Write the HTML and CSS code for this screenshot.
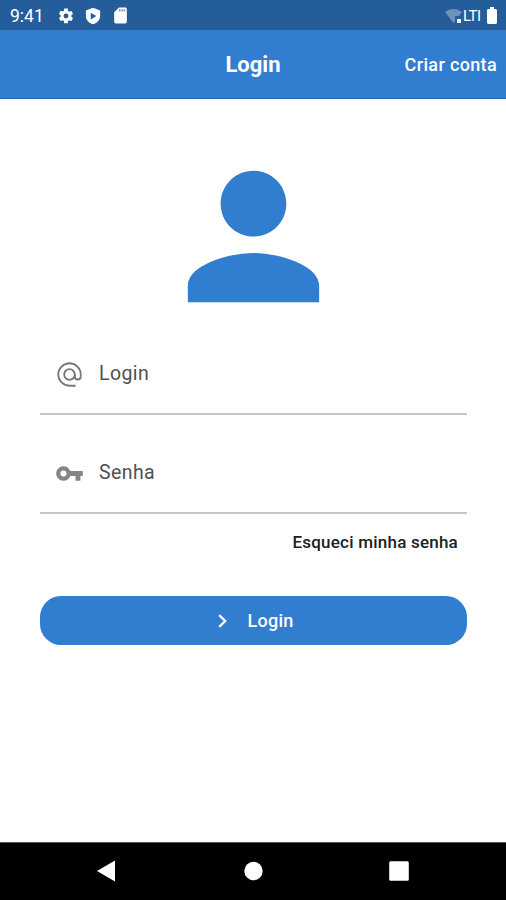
FILE: index.html
```html
<!DOCTYPE html>
<html lang="pt-BR">
<head>
<meta charset="utf-8">
<title>Login</title>
<link rel="stylesheet" href="styles.css">
</head>
<body>
<div class="status">
  <span class="time">9:41</span>
  <svg class="gear" viewBox="0 0 24 24"><path d="M19.14 12.94c.04-.3.06-.61.06-.94s-.02-.64-.07-.94l2.03-1.58a.49.49 0 0 0 .12-.61l-1.92-3.32a.49.49 0 0 0-.59-.22l-2.39.96a7 7 0 0 0-1.62-.94l-.36-2.54A.48.48 0 0 0 13.92 2h-3.84a.48.48 0 0 0-.47.41l-.36 2.54a7.3 7.3 0 0 0-1.62.94l-2.39-.96a.48.48 0 0 0-.59.22L2.74 8.87a.48.48 0 0 0 .12.61l2.03 1.58a6 6 0 0 0 0 1.88l-2.03 1.58a.49.49 0 0 0-.12.61l1.92 3.32c.12.22.37.29.59.22l2.39-.96c.5.38 1.03.7 1.62.94l.36 2.54c.05.24.24.41.48.41h3.84c.24 0 .44-.17.47-.41l.36-2.54a7 7 0 0 0 1.62-.94l2.39.96c.22.08.47 0 .59-.22l1.92-3.32a.48.48 0 0 0-.12-.61zM12 15.3a3.3 3.3 0 1 1 0-6.6 3.3 3.3 0 0 1 0 6.6z"/></svg>
  <svg class="shield" viewBox="0 0 24 24"><path fill-rule="evenodd" d="M12 1 2.500 4.500v7c0 5.500 3.800 9.700 9.500 11.500 5.700-1.800 9.500-6 9.500-11.500v-7zM9 7.500v9l7.500-4.500z"/></svg>
  <svg class="sd" viewBox="0 0 24 24"><path d="M18 2h-8L4 8v12c0 1.100.9 2 2 2h12c1.100 0 2-.9 2-2V4c0-1.100-.9-2-2-2z"/><path class="slots" d="M10 4h2v3h-2zM13 4h2v3h-2zM16 4h2v3h-2z"/></svg>
  <span class="signals">
    <svg class="wifi" viewBox="0 0 18 16"><path class="dim" d="M0 4Q8.500-2 17 4L14 8H10V13L8.500 15z"/><path d="M12 11h4v4h-4z"/></svg>
    <span class="lte">LTI</span>
    <svg class="battery" viewBox="0 0 10 17"><path d="M3 0h4v2h2l1 1v13l-1 1H1l-1-1V3l1-1h2z"/></svg>
  </span>
</div>
<header class="appbar">
  <span></span>
  <h1>Login</h1>
  <a class="create">Criar conta</a>
</header>
<main>
  <svg class="person" viewBox="0 0 24 24"><path d="M12 12c2.210 0 4-1.790 4-4s-1.790-4-4-4-4 1.790-4 4 1.790 4 4 4zm0 2c-2.670 0-8 1.340-8 4v2h16v-2c0-2.660-5.330-4-8-4z"/></svg>
  <div class="field">
    <svg class="at" viewBox="0 0 24 24"><circle cx="12" cy="12" r="4.400"/><path d="M17 21.300h-5A9.300 9.300 0 1 1 21.300 12v1.700a2.450 2.450 0 0 1-4.900 0V12"/></svg>
    <span class="login-label">Login</span>
  </div>
  <div class="field">
    <svg viewBox="0 0 24 24"><path d="M12.650 10C11.830 7.670 9.610 6 7 6c-3.310 0-6 2.690-6 6s2.690 6 6 6c2.610 0 4.830-1.670 5.650-4H17v4h4v-4h2v-4H12.650zM7 14.500a2.500 2.500 0 1 1 0-5 2.500 2.500 0 0 1 0 5z"/></svg>
    <span class="senha-label">Senha</span>
  </div>
  <a class="forgot">Esqueci minha senha</a>
  <button class="submit"><svg viewBox="0 0 9 14"><path d="m1.200 1.200 6 5.800-6 5.800"/></svg><span>Login</span></button>
</main>
<nav class="navbar">
  <svg viewBox="0 0 24 24"><path d="M2 12 20 1.500v21z"/></svg>
  <svg viewBox="0 0 24 24"><circle cx="12.500" cy="12" r="9.200"/></svg>
  <svg viewBox="0 0 24 24"><rect x="2.200" y="2.200" width="19.600" height="19.600" rx="1.500"/></svg>
</nav>
</body>
</html>
```
FILE: styles.css
```css
* { box-sizing: border-box; }
body {
  margin: 0;
  height: 900px;
  display: flex;
  flex-direction: column;
  background: #fff;
  font-family: Roboto, "Liberation Sans", sans-serif;
  overflow: hidden;
}
svg { display: block; flex: none; }
span, a, h1 { white-space: nowrap; }
.status {
  height: 30px;
  flex: none;
  display: flex;
  align-items: center;
  padding: 1px 9px 0 10px;
  background: #245d99;
  color: #fff;
  fill: #fff;
}
.time { width: 47px; font-size: 17.5px; }
.gear { width: 18px; height: 18px; }
.shield { width: 18px; height: 18px; margin-left: 9px; }
.sd { width: 19px; height: 19px; margin-left: 9px; }
.slots { fill: #7799bd; }
.signals { margin-left: auto; display: flex; align-items: center; }
.wifi { width: 18px; height: 16px; }
.dim { fill: #6d92bb; }
.lte { width: 19px; margin-left: 0; font-size: 15px; letter-spacing: -0.5px; }
.battery { width: 10px; height: 17px; margin-left: 5px; }
.appbar {
  height: 69px;
  flex: none;
  display: grid;
  grid-template-columns: 1fr auto 1fr;
  align-items: center;
  padding: 1px 9px 0;
  background: #317dd0;
  border-bottom: 1px solid #216bb9;
  color: #fff;
}
.appbar h1 { margin: 0; font-size: 22px; font-weight: 700; }
.create { justify-self: end; font-size: 18px; font-weight: 500; letter-spacing: 0.35px; }
main {
  flex: 1;
  display: flex;
  flex-direction: column;
  padding: 39px 39px 0 40px;
}
.person { width: 197px; height: 197px; align-self: center; fill: #317dd0; }
.field {
  height: 80px;
  display: flex;
  align-items: center;
  gap: 15px;
  padding: 0 0 1px 15px;
  border-bottom: 2px solid #c6c6c6;
  color: #505050;
  font-size: 19.5px;
  letter-spacing: 0.4px;
}
.field + .field { height: 81px; margin-top: 18px; }
.field svg { width: 29px; height: 29px; margin-top: 2px; fill: #858585; }
.field .at { fill: none; stroke: #777; stroke-width: 1.5; }
.forgot {
  align-self: flex-end;
  margin: 17px 9px 0 0;
  font-size: 17px;
  line-height: 22px;
  font-weight: 500;
  letter-spacing: 0.22px;
  color: #202020;
}
.submit {
  height: 49px;
  margin-top: 43px;
  padding: 0 0 0 5px;
  display: flex;
  align-items: center;
  justify-content: center;
  gap: 20px;
  border: 0;
  border-radius: 21px;
  background: #317dd0;
  color: #fff;
  font: 500 18px Roboto, "Liberation Sans", sans-serif;
  letter-spacing: 0.3px;
}
.submit svg { width: 9px; height: 14px; fill: none; stroke: #fff; stroke-width: 2.3; }
.navbar {
  height: 58px;
  flex: none;
  display: flex;
  align-items: center;
  justify-content: space-between;
  padding: 0 95px 1px;
  background: #000;
  border-top: 1px solid #555;
}
.navbar svg { width: 24px; height: 24px; fill: #fff; }
```
